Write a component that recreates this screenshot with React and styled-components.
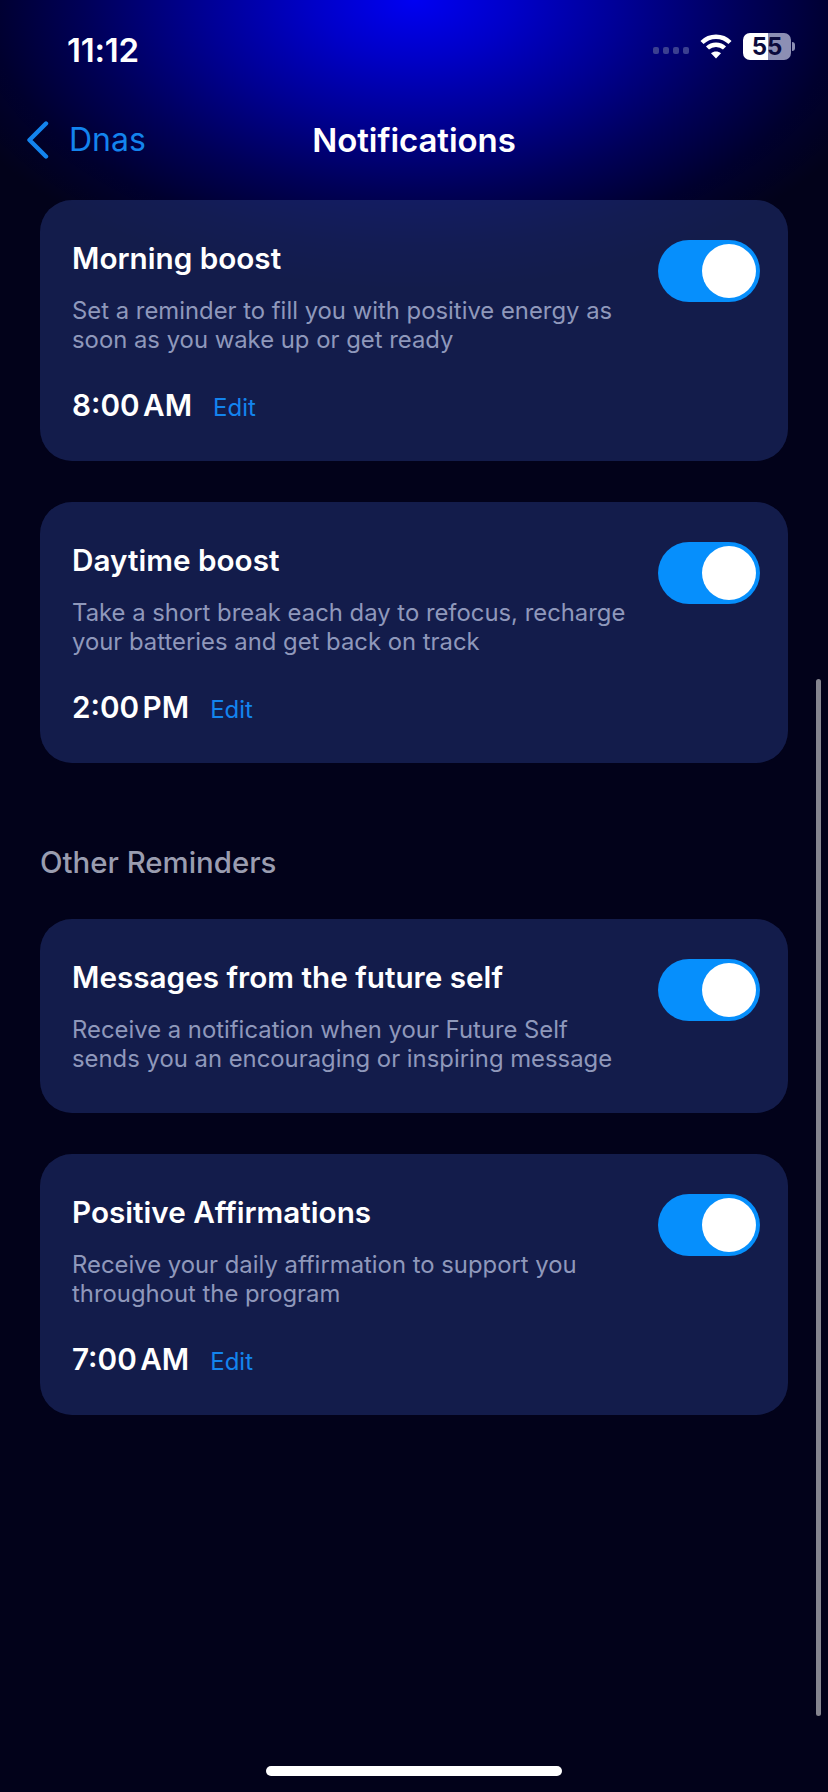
import styled, { createGlobalStyle } from "styled-components";

const GlobalStyle = createGlobalStyle`
  html, body {
    margin: 0;
    padding: 0;
    background: #02021a;
  }
  * { box-sizing: border-box; }
`;

const Page = styled.div`
  position: relative;
  width: 828px;
  height: 1792px;
  overflow: hidden;
  font-family: Inter, "Noto Sans", sans-serif;
  color: #fff;
  background:
    radial-gradient(ellipse 500px 290px at 50% 0, #0000f2 0%, #0000c8 20%, #000094 42%, #000058 66%, #00002e 85%, rgba(2, 2, 26, 0) 100%),
    #02021a;
`;

const StatusBar = styled.div`
  height: 100px;
  padding: 31px 33px 0 67px;
  display: flex;
  justify-content: space-between;
  align-items: flex-start;
`;

const Clock = styled.div`
  font-size: 33px;
  font-weight: 580;
  line-height: 38px;
  letter-spacing: -0.2px;
`;

const StatusIcons = styled.div`
  display: flex;
  align-items: center;
  gap: 11px;
  height: 38px;
  margin-top: -4px;
`;

const Signal = styled.div`
  display: flex;
  gap: 4px;
  margin-top: 8px;
`;

const SignalDot = styled.span`
  width: 6px;
  height: 7px;
  border-radius: 2px;
  background: #3a3f90;
`;

const Battery = styled.div`
  position: relative;
  width: 48px;
  height: 27px;
  border-radius: 7px;
  overflow: hidden;
  background: linear-gradient(90deg, #fff 0 52%, #8c8fb4 52%);
  color: #0a0a3c;
  font-size: 24px;
  font-weight: 700;
  line-height: 27px;
  text-align: center;
`;

const BatteryCap = styled.span`
  width: 3px;
  height: 9px;
  margin-left: -10px;
  border-radius: 0 3px 3px 0;
  background: #8c8fb4;
`;

const NavBar = styled.header`
  position: relative;
  height: 100px;
  display: flex;
  align-items: flex-start;
  justify-content: center;
`;

const Back = styled.div`
  position: absolute;
  left: 26px;
  top: 21px;
  display: flex;
  align-items: center;
  gap: 19px;
  color: #1384ee;
  font-size: 32px;
  line-height: 38px;
`;

const Title = styled.h1`
  margin: 18px 0 0;
  font-size: 33px;
  font-weight: 580;
  line-height: 44px;
  letter-spacing: -0.05px;
`;

const List = styled.main`
  padding: 0 40px;
  display: flex;
  flex-direction: column;
`;

const Card = styled.section`
  position: relative;
  height: ${(p) => p.$height}px;
  margin-bottom: 41px;
  padding: 40px 32px 0;
  border-radius: 32px;
  background: rgba(32, 46, 108, 0.6);
`;

const CardTitle = styled.h2`
  margin: 0;
  font-size: 29.7px;
  font-weight: 580;
  line-height: 36px;
`;

const CardText = styled.p`
  margin: 20px 0 0;
  width: 560px;
  font-size: 23.85px;
  line-height: 29px;
  color: #8f98bb;
`;

const TimeRow = styled.div`
  display: flex;
  align-items: baseline;
  gap: ${(p) => p.$gap}px;
  margin-top: 33px;
`;

const Time = styled.span`
  font-size: 29.7px;
  font-weight: 580;
  line-height: 36px;
  word-spacing: -4px;
`;

const Edit = styled.span`
  font-size: 24px;
  color: #1384ee;
`;

const Toggle = styled.div`
  position: absolute;
  top: 40px;
  right: 28px;
  width: 102px;
  height: 62px;
  border-radius: 31px;
  background: #068ffc;
`;

const Knob = styled.span`
  position: absolute;
  top: 4px;
  right: 4px;
  width: 54px;
  height: 54px;
  border-radius: 50%;
  background: #fff;
`;

const SectionLabel = styled.div`
  margin: 41px 0 38px;
  font-size: 29.4px;
  font-weight: 500;
  line-height: 36px;
  color: #9a9db0;
`;

const Scrollbar = styled.div`
  position: absolute;
  left: 816px;
  top: 679px;
  width: 5px;
  height: 1037px;
  border-radius: 3px;
  background: #85858f;
`;

const HomeBar = styled.div`
  position: absolute;
  left: 266px;
  top: 1766px;
  width: 296px;
  height: 10px;
  border-radius: 5px;
  background: #fff;
`;

const reminder = (title, text, time, gap) => ({ title, text, time, gap });

const boosts = [
  reminder("Morning boost", "Set a reminder to fill you with positive energy as soon as you wake up or get ready", "8:00 AM", 21),
  reminder("Daytime boost", "Take a short break each day to refocus, recharge your batteries and get back on track", "2:00 PM", 21),
];

const others = [
  reminder("Messages from the future self", "Receive a notification when your Future Self sends you an encouraging or inspiring message"),
  reminder("Positive Affirmations", "Receive your daily affirmation to support you throughout the program", "7:00 AM", 21),
];

const ReminderCard = ({ title, text, time, gap }) => (
  <Card $height={time ? 261 : 194}>
    <CardTitle>{title}</CardTitle>
    <CardText>{text}</CardText>
    {time && (
      <TimeRow $gap={gap}>
        <Time>{time}</Time>
        <Edit>Edit</Edit>
      </TimeRow>
    )}
    <Toggle>
      <Knob />
    </Toggle>
  </Card>
);

const App = () => (
  <>
    <GlobalStyle />
    <Page>
      <StatusBar>
        <Clock>11:12</Clock>
        <StatusIcons>
          <Signal>
            <SignalDot />
            <SignalDot />
            <SignalDot />
            <SignalDot />
          </Signal>
          <svg width="32" height="26" viewBox="0 0 32 26" fill="none" stroke="#fff" strokeWidth="4.4">
            <path d="M2 9.5C9.8 1.8 22.2 1.8 30 9.5" />
            <path d="M7.5 15C12 10.6 20 10.6 24.5 15" />
            <path d="M16 25.5l-5-5.2c2.8-2.3 7.2-2.3 10 0z" fill="#fff" stroke="none" />
          </svg>
          <Battery>55</Battery>
          <BatteryCap />
        </StatusIcons>
      </StatusBar>
      <NavBar>
        <Back>
          <svg width="24" height="38" viewBox="0 0 24 38" fill="none" stroke="#1384ee" strokeWidth="4.4" strokeLinecap="round" strokeLinejoin="round">
            <path d="M20 2.5L3.5 19L20 35.5" />
          </svg>
          <span>Dnas</span>
        </Back>
        <Title>Notifications</Title>
      </NavBar>
      <List>
        {boosts.map((item) => (
          <ReminderCard key={item.title} {...item} />
        ))}
        <SectionLabel>Other Reminders</SectionLabel>
        {others.map((item) => (
          <ReminderCard key={item.title} {...item} />
        ))}
      </List>
      <Scrollbar />
      <HomeBar />
    </Page>
  </>
);

export default App;
